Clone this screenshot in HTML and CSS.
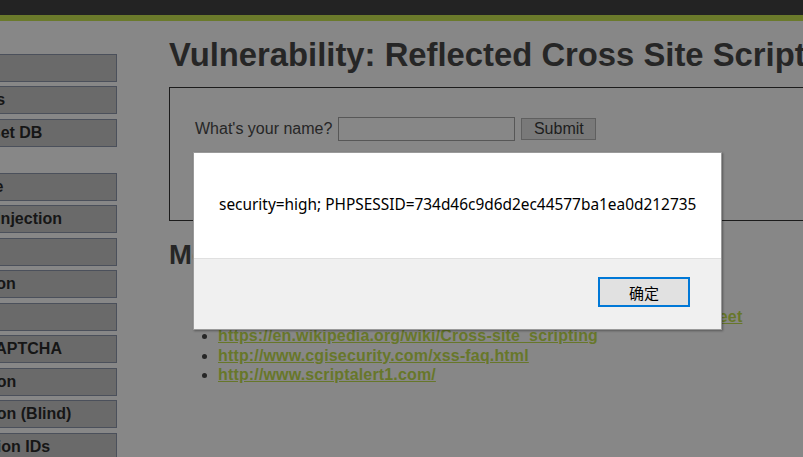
FILE: index.html
```html
<!DOCTYPE html>
<html>
<head>
<meta charset="utf-8">
<link rel="stylesheet" href="styles.css">
</head>
<body>
<div class="header"></div>
<div class="page">
  <nav class="menu">
    <div class="menu-block">
      <div class="menu-item">Home</div>
      <div class="menu-item">Instructions</div>
      <div class="menu-item">Setup / Reset DB</div>
    </div>
    <div class="menu-block">
      <div class="menu-item">Brute Force</div>
      <div class="menu-item">Command Injection</div>
      <div class="menu-item">CSRF</div>
      <div class="menu-item">File Inclusion</div>
      <div class="menu-item">File Upload</div>
      <div class="menu-item">Insecure CAPTCHA</div>
      <div class="menu-item">SQL Injection</div>
      <div class="menu-item">SQL Injection (Blind)</div>
      <div class="menu-item">Weak Session IDs</div>
    </div>
  </nav>
  <main class="content">
    <h1 class="title">Vulnerability: Reflected Cross Site Scripting (XSS)</h1>
    <div class="code-area">
      <form class="name-form">
        <span class="label">What's your name?</span>
        <input class="name-input" type="text">
        <button class="submit" type="button">Submit</button>
      </form>
    </div>
    <h2 class="subtitle">More Information</h2>
    <ul class="links">
      <li><a href="#">https://www.owasp.org/index.php/Cross-site_Scripting_(XSS)</a></li>
      <li><a href="#">https://www.owasp.org/index.php/XSS_Filter_Evasion_Cheat_Sheet</a></li>
      <li><a href="#">https://en.wikipedia.org/wiki/Cross-site_scripting</a></li>
      <li><a href="#">http://www.cgisecurity.com/xss-faq.html</a></li>
      <li><a href="#">http://www.scriptalert1.com/</a></li>
    </ul>
  </main>
</div>
<div class="dialog">
  <div class="dialog-body">security=high; PHPSESSID=734d46c9d6d2ec44577ba1ea0d212735</div>
  <div class="dialog-footer">
    <button class="ok" type="button">确定</button>
  </div>
</div>
</body>
</html>
```
FILE: styles.css
```css
html, body {
  margin: 0;
  padding: 0;
}
body {
  background: #878787;
  font-family: "Liberation Sans", Arial, sans-serif;
  color: #232323;
  overflow: hidden;
  width: 803px;
  height: 457px;
  position: relative;
}
.header {
  height: 15px;
  background: #232323;
  border-bottom: 6px solid #6b7a2b;
}
.page {
  display: flex;
  align-items: flex-start;
}
.menu {
  flex: 0 0 217px;
  margin-left: -100px;
  padding-top: 32.5px;
}
.menu-block + .menu-block {
  margin-top: 26px;
}
.menu-item {
  box-sizing: border-box;
  height: 28px;
  margin-bottom: 4.5px;
  border: 1px solid #4b505b;
  background: #6a6a6a;
  font-weight: bold;
  font-size: 16px;
  line-height: 26px;
  padding-left: 12.5px;
  color: #161616;
  white-space: nowrap;
  overflow: hidden;
}
.content {
  flex: 0 0 760px;
  margin-left: 52px;
}
.title {
  margin: 14.7px 0 0 0;
  font-size: 32.8px;
  line-height: 38px;
  font-weight: bold;
  color: #262626;
  white-space: nowrap;
}
.code-area {
  margin-top: 13.3px;
  box-sizing: border-box;
  height: 134px;
  border: 1px solid #1c1c1c;
  padding: 29.5px 0 0 25px;
}
.name-form {
  display: flex;
  align-items: center;
  height: 24px;
  margin: 0;
}
.label {
  font-size: 16px;
  color: #262626;
}
.name-input {
  box-sizing: border-box;
  width: 177px;
  height: 24px;
  margin: 0 0 0 6px;
  border: 1px solid #575757;
  background: #878787;
  padding: 0;
}
.submit {
  box-sizing: border-box;
  width: 75px;
  height: 22px;
  margin: 0 0 0 6px;
  border: 1px solid #5f5f5f;
  background: #797979;
  font-family: "Liberation Sans", Arial, sans-serif;
  font-size: 16px;
  color: #1e1e1e;
  padding: 0;
}
.subtitle {
  margin: 17.8px 0 0 0;
  font-size: 27.5px;
  line-height: 32px;
  font-weight: bold;
  color: #262626;
}
.links {
  margin: 16.7px 0 0 0;
  padding-left: 49px;
  font-size: 16px;
  line-height: 19.5px;
  color: #262626;
}
.links a {
  color: #67772a;
  font-weight: bold;
  text-decoration: underline;
  letter-spacing: 0.15px;
}
.dialog {
  position: absolute;
  left: 193px;
  top: 152px;
  width: 529px;
  height: 178px;
  box-sizing: border-box;
  border: 1px solid #9a9a9a;
  box-shadow: 1px 1px 2px rgba(0,0,0,0.35);
  display: flex;
  flex-direction: column;
  font-family: "Noto Sans", "Open Sans", sans-serif;
}
.dialog-body {
  box-sizing: border-box;
  height: 106px;
  background: #ffffff;
  border-bottom: 1px solid #e0e0e0;
  padding: 0 0 3px 25px;
  display: flex;
  align-items: center;
  font-size: 15.42px;
  color: #000;
  white-space: nowrap;
}
.dialog-footer {
  flex: 1;
  background: #f0f0f0;
  display: flex;
  justify-content: flex-end;
  align-items: flex-start;
  padding: 18px 31px 0 0;
}
.ok {
  box-sizing: border-box;
  width: 92px;
  height: 30px;
  border: 2px solid #0078d7;
  background: #e1e1e1;
  font-family: "Noto Sans CJK SC", sans-serif;
  font-size: 15px;
  color: #000;
  padding: 0;
}
```
